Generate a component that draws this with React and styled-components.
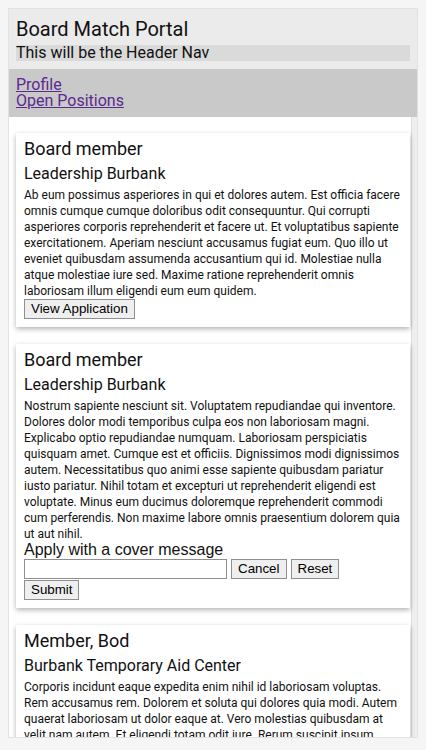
import React from "react";
import styled, { createGlobalStyle } from "styled-components";

const Global = createGlobalStyle`
  html, body { margin: 0; padding: 0; }
  body { background: #f5f5f5; font-family: Roboto, "Liberation Sans", sans-serif; color: #111; }
  #root { padding: 8px 8px 12px; }
`;

const Shell = styled.div`
  height: 730px;
  display: flex;
  flex-direction: column;
  border: 1px solid #e2e2e2;
  box-sizing: border-box;
  background: #ffffff;
  overflow: hidden;
`;

const Header = styled.header`
  background: #ebebeb;
  padding: 8px 7px 8px;
  display: flex;
  flex-direction: column;
  gap: 4px;
`;

const Title = styled.h1`
  margin: 0;
  font-size: 20px;
  font-weight: 400;
  line-height: 24px;
`;

const HeaderNav = styled.div`
  background: #dadada;
  font-size: 16px;
  line-height: 16px;
  height: 16px;
`;

const LinkBar = styled.nav`
  background: #c9c9c9;
  padding: 8px 7px 8px;
  display: flex;
  flex-direction: column;
`;

const NavLink = styled.a`
  color: #5b2a8f;
  font-size: 16px;
  line-height: 16px;
  text-decoration: underline;
  align-self: flex-start;
`;

const Content = styled.main`
  flex: 1;
  min-height: 0;
  overflow: hidden;
  padding: 16px 7px 0 7px;
  display: flex;
  flex-direction: column;
  gap: 17px;
  box-shadow: inset -5px 0 0 #efefef, inset -6px 0 0 #dcdcdc;
`;

const Card = styled.article`
  background: #fff;
  padding: 5px 8px 8px;
  box-shadow: 0 2px 5px rgba(0, 0, 0, 0.3);
  display: flex;
  flex-direction: column;
  align-items: flex-start;
  flex-shrink: 0;
`;

const Role = styled.h2`
  margin: 0 0 4px;
  font-size: 18px;
  font-weight: 400;
  line-height: 22px;
`;

const Org = styled.h3`
  margin: 0 0 3px;
  font-size: 16px;
  font-weight: 400;
  line-height: 20px;
`;

const Body = styled.p`
  margin: 0;
  font-size: 12px;
  line-height: 16px;
`;

const Button = styled.button`
  font-family: "Liberation Sans", Arial, sans-serif;
  font-size: 13.33px;
  color: #000;
  background: #efefef;
  border: 1px solid #8f8f8f;
  border-radius: 0;
  padding: 1px 6px;
  height: 20px;
  line-height: 16px;
`;

const Form = styled.form`
  display: flex;
  flex-wrap: wrap;
  align-items: center;
  gap: 1px 4px;
  width: 330px;
`;

const Label = styled.label`
  font-family: "Liberation Sans", Arial, sans-serif;
  font-size: 16px;
  line-height: 16px;
  width: 100%;
`;

const Input = styled.input`
  width: 203px;
  height: 20px;
  box-sizing: border-box;
  border: 1px solid #8f8f8f;
  font-family: "Liberation Sans", Arial, sans-serif;
  font-size: 13.33px;
  padding: 1px 2px;
`;

const jobs = [
  {
    role: "Board member",
    org: "Leadership Burbank",
    text: "Ab eum possimus asperiores in qui et dolores autem. Est officia facere omnis cumque cumque doloribus odit consequuntur. Qui corrupti asperiores corporis reprehenderit et facere ut. Et voluptatibus sapiente exercitationem. Aperiam nesciunt accusamus fugiat eum. Quo illo ut eveniet quibusdam assumenda accusantium qui id. Molestiae nulla atque molestiae iure sed. Maxime ratione reprehenderit omnis laboriosam illum eligendi eum eum quidem.",
    mode: "view",
  },
  {
    role: "Board member",
    org: "Leadership Burbank",
    text: "Nostrum sapiente nesciunt sit. Voluptatem repudiandae qui inventore. Dolores dolor modi temporibus culpa eos non laboriosam magni. Explicabo optio repudiandae numquam. Laboriosam perspiciatis quisquam amet. Cumque est et officiis. Dignissimos modi dignissimos autem. Necessitatibus quo animi esse sapiente quibusdam pariatur iusto pariatur. Nihil totam et excepturi ut reprehenderit eligendi est voluptate. Minus eum ducimus doloremque reprehenderit commodi cum perferendis. Non maxime labore omnis praesentium dolorem quia ut aut nihil.",
    mode: "apply",
  },
  {
    role: "Member, Bod",
    org: "Burbank Temporary Aid Center",
    text: "Corporis incidunt eaque expedita enim nihil id laboriosam voluptas. Rem accusamus rem. Dolorem et soluta qui dolores quia modi. Autem quaerat laboriosam ut dolor eaque at. Vero molestias quibusdam at velit nam autem. Et eligendi totam odit iure. Rerum suscipit ipsum dolorem quia ut aut nihil. Est officia facere omnis cumque cumque doloribus odit consequuntur.",
    mode: "view",
  },
];

export default function App() {
  return (
    <>
      <Global />
      <Shell>
        <Header>
          <Title>Board Match Portal</Title>
          <HeaderNav>This will be the Header Nav</HeaderNav>
        </Header>
        <LinkBar>
          <NavLink href="#profile">Profile</NavLink>
          <NavLink href="#positions">Open Positions</NavLink>
        </LinkBar>
        <Content>
          {jobs.map((j, i) => (
            <Card key={i}>
              <Role>{j.role}</Role>
              <Org>{j.org}</Org>
              <Body>{j.text}</Body>
              {j.mode === "view" ? (
                <Button type="button">View Application</Button>
              ) : (
                <Form onSubmit={(e) => e.preventDefault()}>
                  <Label htmlFor={`msg-${i}`}>Apply with a cover message</Label>
                  <Input id={`msg-${i}`} type="text" />
                  <Button type="button">Cancel</Button>
                  <Button type="reset">Reset</Button>
                  <Button type="submit">Submit</Button>
                </Form>
              )}
            </Card>
          ))}
        </Content>
      </Shell>
    </>
  );
}
